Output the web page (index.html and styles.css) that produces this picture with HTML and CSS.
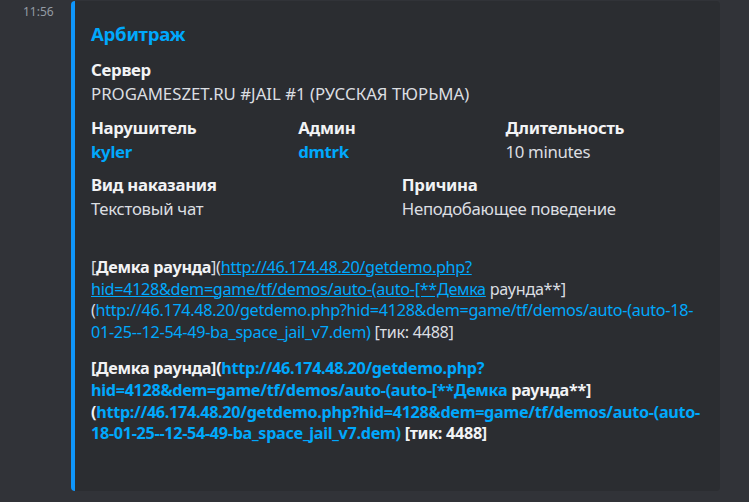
FILE: index.html
```html
<!DOCTYPE html>
<html lang="ru">
<head>
<meta charset="utf-8">
<link rel="stylesheet" href="styles.css">
</head>
<body>
<div class="message">
  <div class="gutter"><span class="time">11:56</span></div>
  <div class="embed">
    <div class="title">Арбитраж</div>
    <div class="fields">
      <div class="field full">
        <div class="fname">Сервер</div>
        <div class="fvalue latin">PROGAMESZET.RU #JAIL #1 (РУССКАЯ ТЮРЬМА)</div>
      </div>
      <div class="field third">
        <div class="fname">Нарушитель</div>
        <div class="fvalue link bold">kyler</div>
      </div>
      <div class="field third">
        <div class="fname">Админ</div>
        <div class="fvalue link bold">dmtrk</div>
      </div>
      <div class="field third">
        <div class="fname">Длительность</div>
        <div class="fvalue">10 minutes</div>
      </div>
      <div class="field half">
        <div class="fname">Вид наказания</div>
        <div class="fvalue">Текстовый чат</div>
      </div>
      <div class="field half">
        <div class="fname">Причина</div>
        <div class="fvalue">Неподобающее поведение</div>
      </div>
    </div>
    <div class="desc">
      <p class="para">
        <span class="line">[<b>Демка раунда</b>](<a class="u">http://46.174.48.20/getdemo.php?</a></span>
        <span class="line"><a class="u">hid=4128&amp;dem=game/tf/demos/auto-(auto-[**Демка</a> раунда**]</span>
        <span class="line">(<a>http://46.174.48.20/getdemo.php?hid=4128&amp;dem=game/tf/demos/auto-(auto-18-</a></span>
        <span class="line"><a>01-25--12-54-49-ba_space_jail_v7.dem)</a> [тик: 4488]</span>
      </p>
      <p class="para strong">
        <span class="line">[Демка раунда](<a>http://46.174.48.20/getdemo.php?</a></span>
        <span class="line"><a>hid=4128&amp;dem=game/tf/demos/auto-(auto-[**Демка</a> раунда**]</span>
        <span class="line">(<a>http://46.174.48.20/getdemo.php?hid=4128&amp;dem=game/tf/demos/auto-(auto-</a></span>
        <span class="line"><a>18-01-25--12-54-49-ba_space_jail_v7.dem)</a> [тик: 4488]</span>
      </p>
    </div>
  </div>
</div>
</body>
</html>
```
FILE: styles.css
```css
html, body {
  margin: 0;
  padding: 0;
  background: #313338;
  font-family: "Noto Sans", "Open Sans", sans-serif;
  color: #dbdee1;
}
.message {
  display: flex;
  padding-top: 1px;
  height: 501px;
  box-sizing: border-box;
}
.gutter {
  width: 71px;
  flex: none;
  padding-left: 23px;
  box-sizing: border-box;
}
.time {
  display: block;
  font-size: 12px;
  line-height: 22px;
  color: #949ba4;
}
.embed {
  width: 649px;
  height: 490px;
  box-sizing: border-box;
  background: #2b2d31;
  border-left: 4px solid #0f96fb;
  border-radius: 4px;
  padding: 20px 17px 0 16px;
}
.title {
  font-size: 18.6px;
  font-weight: 700;
  line-height: 26px;
  letter-spacing: -0.3px;
  color: #00a8fc;
}
.fields {
  display: grid;
  grid-template-columns: repeat(12, 1fr);
  column-gap: 9.6px;
  row-gap: 12px;
  margin-top: 12px;
  font-size: 16.8px;
  line-height: 21.6px;
  letter-spacing: -0.3px;
}
.fields .latin { letter-spacing: 0; }
.field.full { grid-column: span 12; }
.field.third { grid-column: span 4; }
.field.half { grid-column: span 6; }
.fname {
  font-weight: 700;
  color: #f2f3f5;
  margin-bottom: 2.4px;
}
.fvalue { color: #dbdee1; }
.link { color: #00a8fc; }
.bold { font-weight: 700; }
.desc {
  margin-top: 37px;
  font-size: 16.2px;
  line-height: 21.8px;
  letter-spacing: -0.3px;
}
.para { margin: 0; }
.para + .para { margin-top: 14px; }
.line {
  display: block;
  white-space: nowrap;
}
.desc b { font-weight: 700; color: #f2f3f5; }
.desc a { color: #00a8fc; text-decoration: none; }
.desc a.u { text-decoration: underline; }
.strong { font-weight: 700; color: #f2f3f5; }
```
